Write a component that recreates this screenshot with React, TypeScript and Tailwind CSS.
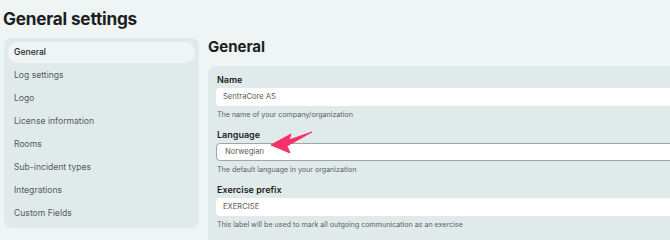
import React from "react";

const items = [
  "General",
  "Log settings",
  "Logo",
  "License information",
  "Rooms",
  "Sub-incident types",
  "Integrations",
  "Custom Fields",
];

function Field({
  label,
  value,
  help,
  focused,
}: {
  label: string;
  value: string;
  help: string;
  focused?: boolean;
}) {
  return (
    <div className="flex flex-col">
      <div className="h-[11px] leading-[11px] text-[9px] font-semibold text-[#1d2222] pl-[1px]">{label}</div>
      <div
        className={
          "mt-[3px] h-[18px] w-[470px] bg-white rounded-[4px] flex items-center text-[7.6px] text-[#555b5b] " +
          (focused ? "border-[1.5px] border-[#9ea6a6] pl-[8px]" : "pl-[7px]")
        }
      >
        {value}
      </div>
      <div className="mt-[4px] h-[10px] leading-[10px] text-[7.1px] text-[#5a6060] pl-[1px]">{help}</div>
    </div>
  );
}

export default function App() {
  return (
    <div
      className="w-[670px] h-[240px] overflow-hidden bg-[#eff4f4] relative"
      style={{ fontFamily: "Inter, 'Noto Sans', sans-serif" }}
    >
      <div className="pl-[3px] pt-[8px] h-[38px] text-[17.2px] leading-[22px] font-bold text-[#1b1f1f] tracking-[-0.2px]">
        General settings
      </div>
      <div className="flex pl-[4px] gap-[9px]">
        <div className="w-[195px] shrink-0 h-[190px] bg-[#e1eaea] rounded-[8px] p-[4px] flex flex-col gap-[2px]">
          {items.map((it, i) => (
            <div
              key={it}
              className={
                "h-[21px] flex items-center pl-[6px] text-[8.6px] rounded-[10px] " +
                (i === 0 ? "bg-[#eff4f4] text-[#1f2424] font-medium" : "text-[#555b5b]")
              }
            >
              {it}
            </div>
          ))}
        </div>
        <div className="w-[470px] shrink-0 flex flex-col">
          <div className="h-[28px] text-[15px] leading-[18px] font-bold text-[#1b1f1f]">General</div>
          <div className="bg-[#e1eaea] rounded-tl-[8px] pl-[8px] pt-[8px] flex flex-col gap-[9px] h-[180px]">
            <Field label="Name" value="SentraCore AS" help="The name of your company/organization" />
            <Field
              label="Language"
              value="Norwegian"
              help="The default language in your organization"
              focused
            />
            <Field
              label="Exercise prefix"
              value="EXERCISE"
              help="This label will be used to mark all outgoing communication as an exercise"
            />
          </div>
        </div>
      </div>
      <svg className="absolute left-0 top-0 pointer-events-none" width="670" height="240">
        <path
          d="M312 132 L289 140 L291 134 L271 145 L290 153 L287 146 Z"
          fill="#f5306c"
          stroke="#f5306c"
          strokeWidth="1"
          strokeLinejoin="round"
        />
      </svg>
    </div>
  );
}
